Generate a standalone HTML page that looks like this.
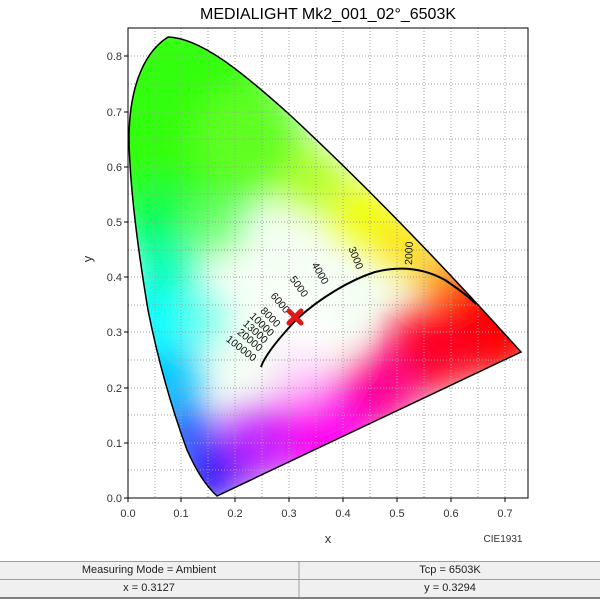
<!DOCTYPE html>
<html><head><style>
body{margin:0;width:600px;height:600px;background:#fff;overflow:hidden;font-family:"Liberation Sans",sans-serif;}
.tb{position:absolute;left:0;width:600px;height:17px;background:#f0f0f0;border-top:1px solid #a0a0a0;font-size:11px;color:#222;}
.c{position:absolute;top:0;height:17px;line-height:17px;text-align:center;}
</style></head><body>
<svg width="600" height="560" style="position:absolute;left:0;top:0" font-family="Liberation Sans, sans-serif">
<defs>
<clipPath id="loc"><path id="lp" d="M217,496 C205,485 196,470 187,450 C176,420 160,370 148,310 C138,250 130,190 129,140 C129,95 140,55 168,37 C200,38 240,70 290,115 C360,180 440,262 521,352 Z"/></clipPath>
<filter id="bl" x="-50%" y="-50%" width="200%" height="200%"><feGaussianBlur stdDeviation="18"/></filter>
</defs>
<g clip-path="url(#loc)">
<rect x="120" y="30" width="420" height="470" fill="#f4fff4"/>
<g filter="url(#bl)">
<circle cx="175" cy="120" r="110" fill="#30ff10"/>
<circle cx="250" cy="140" r="55" fill="#60ff20"/>
<circle cx="160" cy="225" r="40" fill="#00ff50"/>
<circle cx="215" cy="225" r="28" fill="#70ff70"/>
<circle cx="315" cy="180" r="32" fill="#b0ff20"/>
<circle cx="365" cy="215" r="32" fill="#f0ff00"/>
<circle cx="405" cy="245" r="28" fill="#ffe000"/>
<circle cx="445" cy="278" r="24" fill="#ff9000"/>
<circle cx="490" cy="325" r="55" fill="#ff0000"/>
<circle cx="430" cy="350" r="45" fill="#ff0020"/>
<circle cx="375" cy="392" r="40" fill="#ff0090"/>
<circle cx="315" cy="428" r="50" fill="#ff00f0"/>
<circle cx="255" cy="448" r="38" fill="#c020ff"/>
<circle cx="210" cy="475" r="32" fill="#2010ff"/>
<circle cx="185" cy="430" r="28" fill="#1050ff"/>
<circle cx="165" cy="375" r="35" fill="#00c0ff"/>
<circle cx="160" cy="315" r="40" fill="#00ffff"/>
<circle cx="205" cy="320" r="22" fill="#60ffe8"/>
<circle cx="165" cy="265" r="30" fill="#00ffb0"/>
<circle cx="300" cy="375" r="25" fill="#ffd0ff"/>
<circle cx="300" cy="320" r="28" fill="#fff"/>
<circle cx="275" cy="300" r="15" fill="#fff"/>
<circle cx="325" cy="345" r="18" fill="#fff"/>
</g>
</g>
<g stroke="#a0a0a0" stroke-width="1" stroke-dasharray="1,2">
<path d="M155,28V498M181,28V498M208,28V498M235,28V498M262,28V498M289,28V498M316,28V498M343,28V498M370,28V498M397,28V498M424,28V498M451,28V498M478,28V498M505,28V498"/>
<path d="M128,470H528M128,443H528M128,415H528M128,388H528M128,360H528M128,332H528M128,305H528M128,277H528M128,250H528M128,222H528M128,194H528M128,167H528M128,139H528M128,112H528M128,84H528M128,56H528"/>
</g>
<use href="#lp" fill="none" stroke="#000" stroke-width="1.5"/>
<rect x="128" y="28" width="400" height="470" fill="none" stroke="#000" stroke-width="1"/>
<g stroke="#000"><path d="M124,498H128M124,443H128M124,388H128M124,332H128M124,277H128M124,222H128M124,167H128M124,112H128M124,56H128M128,498V502M181,498V502M235,498V502M289,498V502M343,498V502M397,498V502M451,498V502M505,498V502"/></g>
<g font-size="11" fill="#333" text-anchor="end">
<text x="122" y="502">0.0</text><text x="122" y="447">0.1</text><text x="122" y="392">0.2</text><text x="122" y="336">0.3</text><text x="122" y="281">0.4</text><text x="122" y="226">0.5</text><text x="122" y="171">0.6</text><text x="122" y="116">0.7</text><text x="122" y="60">0.8</text>
</g>
<g font-size="11" fill="#333" text-anchor="middle">
<text x="128" y="517">0.0</text><text x="181" y="517">0.1</text><text x="235" y="517">0.2</text><text x="289" y="517">0.3</text><text x="343" y="517">0.4</text><text x="397" y="517">0.5</text><text x="451" y="517">0.6</text><text x="505" y="517">0.7</text>
</g>
<text x="328" y="19" font-size="16" text-anchor="middle" fill="#000">MEDIALIGHT Mk2_001_02°_6503K</text>
<text x="328" y="543" font-size="13" text-anchor="middle" fill="#333">x</text>
<text x="92" y="267" font-size="13" text-anchor="middle" fill="#333" transform="rotate(-90 88 263)">y</text>
<text x="503" y="542" font-size="10" text-anchor="middle" fill="#333">CIE1931</text>
<path d="M261,367 C265,355 280,337 297,319 C320,298 350,280 375,272 C395,267 420,266 445,280 C460,290 470,298 476,304" fill="none" stroke="#000" stroke-width="2"/>
<g font-size="10.5" fill="#111">
<text transform="translate(253,362) rotate(38)" text-anchor="end">100000</text>
<text transform="translate(259,352) rotate(40)" text-anchor="end">20000</text>
<text transform="translate(264,344) rotate(42)" text-anchor="end">13000</text>
<text transform="translate(270,337) rotate(44)" text-anchor="end">10000</text>
<text transform="translate(276,328) rotate(46)" text-anchor="end">8000</text>
<text transform="translate(285,314) rotate(50)" text-anchor="end">6000</text>
<text transform="translate(303,298) rotate(54)" text-anchor="end">5000</text>
<text transform="translate(323,285) rotate(60)" text-anchor="end">4000</text>
<text transform="translate(357,270) rotate(68)" text-anchor="end">3000</text>
<text transform="translate(412,265) rotate(-88)" text-anchor="start">2000</text>
</g>
<path d="M289,311 L301,323 M301,311 L289,323" stroke="#e01818" stroke-width="5" stroke-linecap="round"/>
</svg>
<div class="tb" style="top:561px"><div class="c" style="left:0;width:298px;border-right:2px solid #c8c8c8">Measuring Mode = Ambient</div><div class="c" style="left:300px;width:300px">Tcp = 6503K</div></div>
<div class="tb" style="top:579px;border-bottom:2px solid #808080"><div class="c" style="left:0;width:298px;border-right:2px solid #c8c8c8">x = 0.3127</div><div class="c" style="left:300px;width:300px">y = 0.3294</div></div>
</body></html>
